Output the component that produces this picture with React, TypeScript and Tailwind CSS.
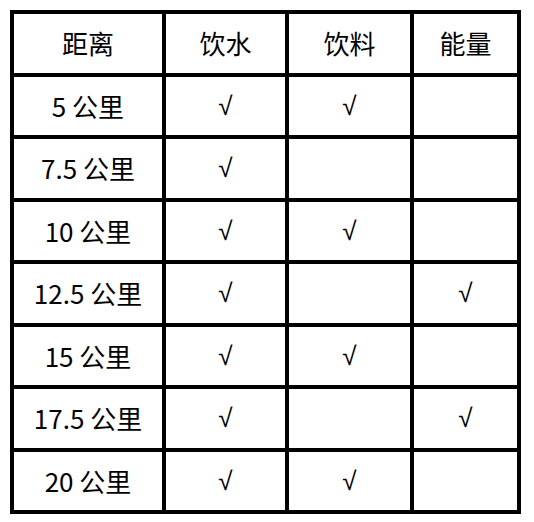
const headers = ["距离", "饮水", "饮料", "能量"];

const rows: [string, boolean, boolean, boolean][] = [
  ["5 公里", true, true, false],
  ["7.5 公里", true, false, false],
  ["10 公里", true, true, false],
  ["12.5 公里", true, false, true],
  ["15 公里", true, true, false],
  ["17.5 公里", true, false, true],
  ["20 公里", true, true, false],
];

function Cell({ children }: { children?: React.ReactNode }) {
  return (
    <div className="bg-white flex items-center justify-center text-[26px] text-black leading-none">
      {children}
    </div>
  );
}

// √ in Liberation Sans has no overbar, like the reference
function Check({ on }: { on: boolean }) {
  return <Cell>{on && <span className="font-['Liberation_Sans',sans-serif]">√</span>}</Cell>;
}

export default function App() {
  return (
    <div className="w-[534px] h-[522px] bg-white pt-[10px] pl-[10px] font-['Noto_Sans_CJK_SC',sans-serif]">
      <div className="grid w-[511px] grid-cols-[148px_119px_121px_103px] grid-rows-[repeat(8,58.5px)] gap-[4px] bg-black p-[4px]">
        {headers.map((h) => (
          <Cell key={h}>{h}</Cell>
        ))}
        {rows.map(([dist, water, drink, energy]) => (
          <>
            <Cell key={dist}>{dist}</Cell>
            <Check on={water} />
            <Check on={drink} />
            <Check on={energy} />
          </>
        ))}
      </div>
    </div>
  );
}
